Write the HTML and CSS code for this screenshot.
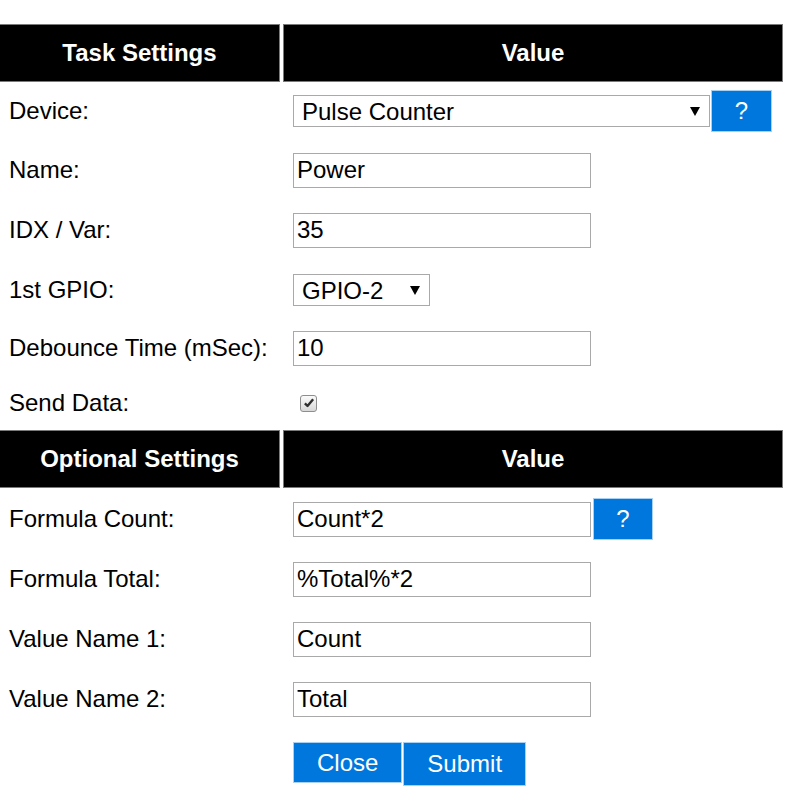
FILE: index.html
```html
<!DOCTYPE html>
<html lang="en">
<head>
<meta charset="utf-8">
<title>Task Settings</title>
<link rel="stylesheet" href="styles.css">
</head>
<body>
<form class="page">
  <div class="grid">
    <div class="th th-first">Task Settings</div>
    <div class="th">Value</div>

    <div class="label">Device:</div>
    <div class="value">
      <span class="select-wrap"><select class="select select-device"><option>Pulse Counter</option></select></span>
      <button type="button" class="button help">?</button>
    </div>

    <div class="label">Name:</div>
    <div class="value"><input class="input" type="text" value="Power"></div>

    <div class="label">IDX / Var:</div>
    <div class="value"><input class="input" type="text" value="35"></div>

    <div class="label">1st GPIO:</div>
    <div class="value">
      <span class="select-wrap"><select class="select select-gpio"><option>GPIO-2</option></select></span>
    </div>

    <div class="label">Debounce Time (mSec):</div>
    <div class="value"><input class="input" type="text" value="10"></div>

    <div class="label">Send Data:</div>
    <div class="value">
      <span class="checkbox" role="checkbox" aria-checked="true">
        <svg viewBox="0 0 16 16" width="12" height="12"><path d="M2.5 8.5 L6 12 L13.5 3" fill="none" stroke="#2f2f2f" stroke-width="3.2" stroke-linejoin="round"/></svg>
      </span>
    </div>

    <div class="th th-first">Optional Settings</div>
    <div class="th">Value</div>

    <div class="label">Formula Count:</div>
    <div class="value">
      <input class="input" type="text" value="Count*2">
      <button type="button" class="button help help-small">?</button>
    </div>

    <div class="label">Formula Total:</div>
    <div class="value"><input class="input" type="text" value="%Total%*2"></div>

    <div class="label">Value Name 1:</div>
    <div class="value"><input class="input" type="text" value="Count"></div>

    <div class="label">Value Name 2:</div>
    <div class="value"><input class="input" type="text" value="Total"></div>

    <div class="label"></div>
    <div class="value value-actions">
      <button type="button" class="button close">Close</button>
      <button type="submit" class="button submit">Submit</button>
    </div>
  </div>
</form>
</body>
</html>
```

FILE: styles.css
```css
* { box-sizing: border-box; }

html, body {
  margin: 0;
  background: #fff;
}

body {
  font-family: "Liberation Sans", Arial, sans-serif;
  font-size: 24px;
  color: #000;
}

.page {
  padding-top: 24px;
}

.grid {
  display: grid;
  grid-template-columns: 280px 500px;
  column-gap: 3px;
  grid-template-rows: 58px 58px 60px 60px 60px 56px 54px 58px 62px 58px 62px 58px 70px;
}

.th {
  background: #000;
  color: #fff;
  font-weight: bold;
  border: 1px solid #7a7a7a;
  display: flex;
  align-items: center;
  justify-content: center;
}

.th-first {
  border-left: none;
}

.label {
  display: flex;
  align-items: center;
  padding-left: 9px;
  white-space: nowrap;
}

.value {
  display: flex;
  align-items: center;
  padding-left: 10px;
}

.input {
  font: inherit;
  color: #000;
  width: 298px;
  height: 35px;
  margin: 0;
  padding: 0 3px;
  border: 1px solid #a9a9a9;
  background: #fff;
  outline: none;
}

.select-wrap {
  position: relative;
  display: inline-block;
}

.select-wrap::after {
  content: "";
  position: absolute;
  right: 10px;
  top: 50%;
  margin-top: -4px;
  border-style: solid;
  border-width: 9px 5px 0 5px;
  border-color: #000 transparent transparent transparent;
  pointer-events: none;
}

.select {
  -webkit-appearance: none;
  appearance: none;
  font: inherit;
  color: #000;
  height: 32px;
  margin: 0;
  padding: 0 0 0 8px;
  border: 1px solid #a9a9a9;
  border-radius: 0;
  background: #fff;
  display: block;
}

.select-device {
  width: 417px;
}

.select-gpio {
  width: 137px;
}

.button {
  font: inherit;
  color: #fff;
  background: #0077dd;
  border: 1px solid #a8d0f2;
  margin: 0;
  padding: 0 23px;
  cursor: pointer;
  line-height: 1;
}

.help {
  width: 61px;
  height: 42px;
  padding: 0;
  margin-left: 1px;
}

.help-small {
  width: 60px;
  margin-left: 2px;
}

.checkbox {
  width: 17px;
  height: 17px;
  margin-left: 7px;
  border: 1px solid #8e8e8e;
  border-radius: 3px;
  background: linear-gradient(#fbfbfb, #d8d8d8);
  display: flex;
  align-items: center;
  justify-content: center;
}

.value-actions {
  align-items: flex-start;
  padding-top: 14px;
  gap: 1px;
}

.close {
  height: 41px;
}

.submit {
  height: 44px;
}
```
